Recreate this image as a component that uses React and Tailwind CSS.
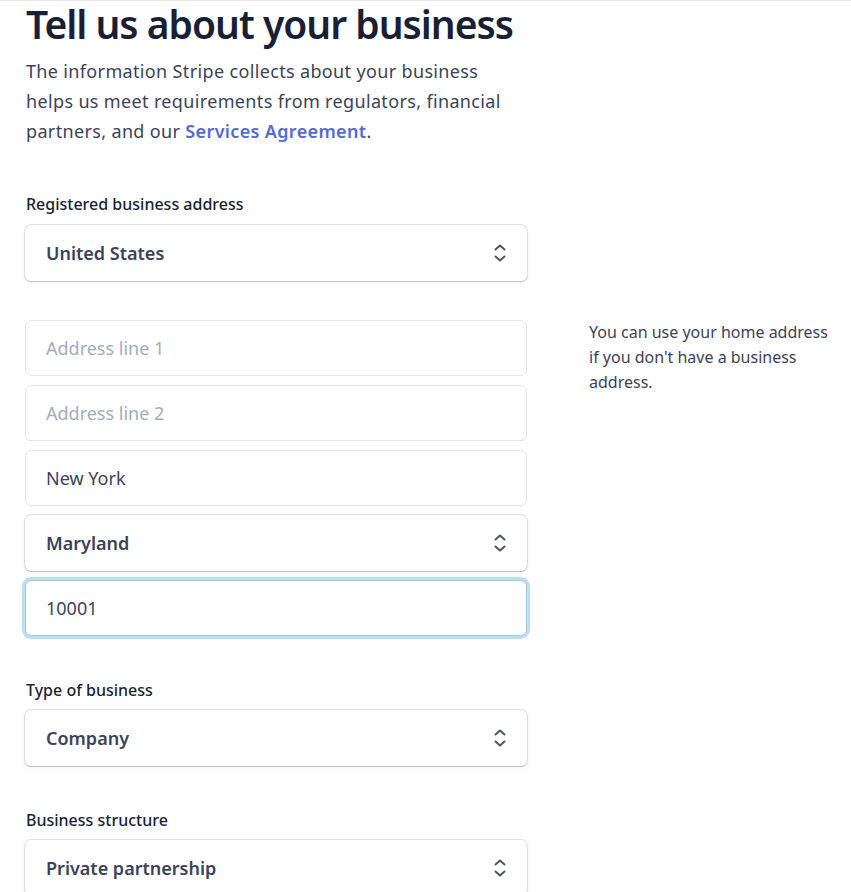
import { useState } from "react";

function Chevrons() {
  return (
    <svg
      viewBox="0 0 12 20"
      className="pointer-events-none absolute right-[21px] top-1/2 h-[20px] w-[12px] -translate-y-1/2"
      fill="none"
      stroke="#4f566b"
      strokeWidth="2"
      strokeLinecap="round"
      strokeLinejoin="round"
    >
      <path d="M1.5 6.5 6 2.5l4.5 4" />
      <path d="M1.5 13.5l4.5 4 4.5-4" />
    </svg>
  );
}

function SelectField({ value, options, onChange }) {
  return (
    <div className="relative">
      <select
        value={value}
        onChange={(e) => onChange(e.target.value)}
        className="h-[56px] w-full appearance-none rounded-[6px] bg-white pl-[21px] pr-12 text-[18px] font-semibold text-[#3c4257] outline-none shadow-[0_0_0_1px_rgba(60,66,87,0.14),0_1px_1px_0_rgba(0,0,0,0.14),0_2px_5px_0_rgba(60,66,87,0.06)]"
      >
        {options.map((o) => (
          <option key={o} value={o}>{o}</option>
        ))}
      </select>
      <Chevrons />
    </div>
  );
}

function TextField({ value, placeholder, onChange, focused }) {
  return (
    <input
      value={value}
      placeholder={placeholder}
      onChange={(e) => onChange(e.target.value)}
      className={
        focused
          ? "h-[56px] w-full rounded-[6px] border border-[#9cc7e8] bg-white pl-[20px] text-[18px] text-[#3c4257] outline-none shadow-[0_0_0_3px_rgba(58,151,212,0.32)] placeholder:text-[#a3acb9]"
          : "h-[56px] w-full rounded-[6px] border border-[#e3e6ea] bg-white pl-[20px] text-[18px] text-[#3c4257] outline-none placeholder:text-[#a3acb9]"
      }
    />
  );
}

export default function App() {
  const [form, setForm] = useState({
    country: "United States",
    line1: "",
    line2: "",
    city: "New York",
    state: "Maryland",
    zip: "10001",
    type: "Company",
    structure: "Private partnership"
  });

  const set = (field) => (v) => setForm((prev) => ({ ...prev, [field]: v }));

  return (
    <div
      className="min-h-screen overflow-hidden border-t border-[#e6e6e6] bg-white pl-[25px]"
      style={{ fontFamily: '"Noto Sans", "Open Sans", sans-serif' }}
    >
      <h1 className="pl-px text-[39px] font-semibold leading-[46px] tracking-[-1px] text-[#1a1f36]">Tell us about your business</h1>
      <p className="mt-[9px] pl-px text-[18px] leading-[30px] tracking-[0.35px] text-[#3c4257]">
        The information Stripe collects about your business
        <br />
        helps us meet requirements from regulators, financial
        <br />
        partners, and our <a href="#" className="font-semibold text-[#5469d4]">Services Agreement</a>.
      </p>

      <div className="mt-[46px] flex">
        <div className="w-[502px] shrink-0">
          <label className="mb-[9px] block pl-px text-[16px] font-medium leading-[24px] text-[#1a1f36]">Registered business address</label>
          <SelectField value={form.country} onChange={set("country")} options={["United States", "Canada", "United Kingdom"]} />

          <div className="mt-[39px] flex flex-col gap-[9px]">
            <TextField value={form.line1} onChange={set("line1")} placeholder="Address line 1" />
            <TextField value={form.line2} onChange={set("line2")} placeholder="Address line 2" />
            <TextField value={form.city} onChange={set("city")} placeholder="City" />
            <SelectField value={form.state} onChange={set("state")} options={["Maryland", "New York", "California"]} />
            <TextField value={form.zip} onChange={set("zip")} placeholder="ZIP" focused />
          </div>

          <label className="mb-[8px] mt-[42px] block pl-px text-[16px] font-medium leading-[24px] text-[#1a1f36]">Type of business</label>
          <SelectField value={form.type} onChange={set("type")} options={["Company", "Individual", "Non-profit"]} />

          <label className="mb-[8px] mt-[42px] block pl-px text-[16px] font-medium leading-[24px] text-[#1a1f36]">Business structure</label>
          <SelectField value={form.structure} onChange={set("structure")} options={["Private partnership", "Public partnership", "Private corporation"]} />
        </div>

        <div className="ml-[62px] mt-[128px] w-[252px] text-[16px] leading-[25px] text-[#3c4257]">
          You can use your home address if you don't have a business address.
        </div>
      </div>
    </div>
  );
}
